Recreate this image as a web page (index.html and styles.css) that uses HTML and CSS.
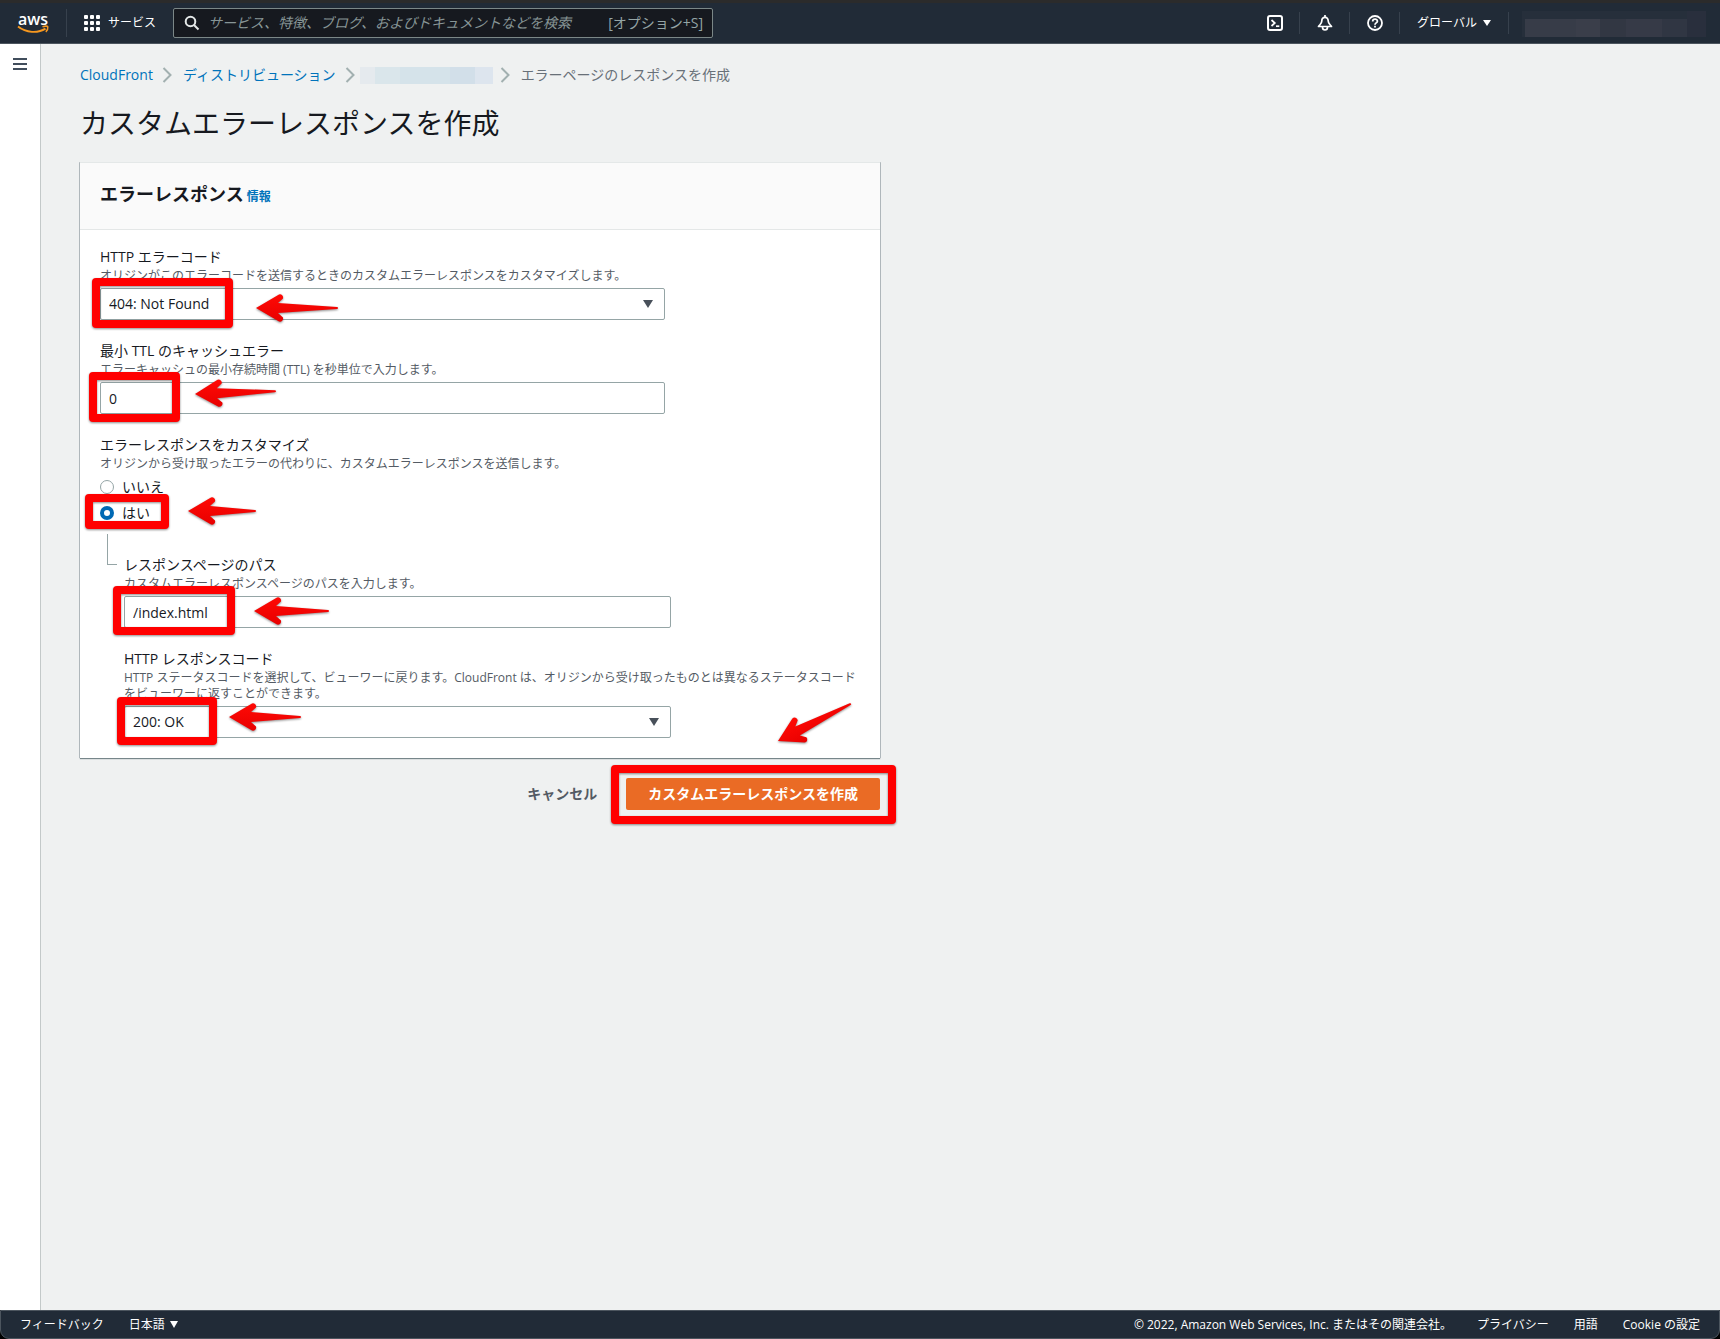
FILE: index.html
```html
<!DOCTYPE html>
<html lang="ja">
<head>
<meta charset="utf-8">
<meta name="viewport" content="width=device-width, initial-scale=1">
<title>CloudFront - カスタムエラーレスポンスを作成</title>
<link rel="stylesheet" href="styles.css">
</head>
<body>
<header class="topbar">
  <a class="logo" href="#" aria-label="AWS">
    <svg width="34" height="28" viewBox="0 0 34 28">
      <text class="logo-text" x="17" y="16" text-anchor="middle">aws</text>
      <path d="M2 17.600C10 24 22 24.500 29.500 19.600" fill="none" stroke="#f7981f" stroke-width="1.900"/>
      <path d="M26.500 17.800C29 17 31.500 17.200 31.800 17.900C32 19 31.200 21.500 29.800 22.900" fill="none" stroke="#f7981f" stroke-width="1.500"/>
    </svg>
  </a>
  <button class="services" type="button">
    <svg width="16" height="16" viewBox="0 0 16 16" fill="#fff">
      <rect width="4" height="4" rx="1"/><rect x="6" width="4" height="4" rx="1"/><rect x="12" width="4" height="4" rx="1"/>
      <rect y="6" width="4" height="4" rx="1"/><rect x="6" y="6" width="4" height="4" rx="1"/><rect x="12" y="6" width="4" height="4" rx="1"/>
      <rect y="12" width="4" height="4" rx="1"/><rect x="6" y="12" width="4" height="4" rx="1"/><rect x="12" y="12" width="4" height="4" rx="1"/>
    </svg>
    サービス
  </button>
  <label class="search">
    <svg width="16" height="16" viewBox="0 0 16 16" fill="none" stroke="#e4e8e8" stroke-width="2">
      <circle cx="6.500" cy="6.500" r="4.800"/><path d="M10 10l4.500 4.500"/>
    </svg>
    <input class="search-input" type="text" aria-label="検索" placeholder="サービス、特徴、ブログ、およびドキュメントなどを検索">
    <span class="shortcut">[オプション+S]</span>
  </label>
  <div class="tools">
    <button class="tool" type="button" aria-label="CloudShell">
      <svg width="16" height="16" viewBox="0 0 16 16" fill="none" stroke="#fff" stroke-width="2">
        <rect x="1" y="1" width="14" height="14" rx="2"/><path d="M4.500 5l3.300 3-3.300 3" stroke-width="1.700"/><path d="M9 11.200h3.300" stroke-width="1.700"/>
      </svg>
    </button>
    <button class="tool" type="button" aria-label="通知">
      <svg width="16" height="16" viewBox="0 0 16 16" fill="none" stroke="#fff" stroke-width="1.700" stroke-linejoin="round">
        <path d="M8 2.300C5.700 2.300 4.800 4 4.800 6C4.800 8.500 3 9.500 1.500 11.500H14.500C13 9.500 11.200 8.500 11.200 6C11.200 4 10.300 2.300 8 2.300Z"/>
        <path d="M8 0v2.500M5.500 12c0 4 5 4 5 0"/>
      </svg>
    </button>
    <button class="tool" type="button" aria-label="ヘルプ">
      <svg width="16" height="16" viewBox="0 0 16 16" fill="none" stroke="#fff" stroke-width="1.800">
        <circle cx="8" cy="8" r="7"/><path d="M5.700 6.400C5.700 3.300 10.400 3.400 10.400 6.200C10.400 7.900 8 7.900 8 9.700M8 10.800v1.800"/>
      </svg>
    </button>
    <button class="region" type="button">グローバル
      <svg width="8" height="6" viewBox="0 0 8 6" fill="#fff"><path d="M0 0h8L4 6z"/></svg>
    </button>
    <div class="account">
      <svg width="184" height="26" viewBox="0 0 184 26">
        <path fill="#262f3b" d="M0 0h165v26H0z"/><path fill="#292f3d" d="M165 0h19v26h-19z"/>
        <path fill="#373c48" d="M3 8h51v18H3z"/><path fill="#3a3e4a" d="M54 8h24v18H54z"/>
        <path fill="#323743" d="M78 8h26v18H78z"/><path fill="#363a47" d="M104 8h36v18h-36z"/>
        <path fill="#303643" d="M140 8h25v18h-25z"/>
      </svg>
    </div>
  </div>
</header>

<div class="shell">
  <nav class="rail">
    <button class="menu" type="button" aria-label="メニュー">
      <svg width="14" height="12" viewBox="0 0 14 12" fill="#414d5c"><path d="M0 0h14v2H0zM0 5h14v2H0zM0 10h14v2H0z"/></svg>
    </button>
  </nav>
  <main class="main">
    <nav class="crumbs">
      <a href="#">CloudFront</a>
      <svg class="chevron" width="10" height="16" viewBox="0 0 10 16"><path d="M1.500 1l7 7-7 7"/></svg>
      <a href="#">ディストリビューション</a>
      <svg class="chevron" width="10" height="16" viewBox="0 0 10 16"><path d="M1.500 1l7 7-7 7"/></svg>
      <svg class="masked" width="133" height="17" viewBox="0 0 133 17">
        <path fill="#e5eaee" d="M0 0h15v17H0z"/><path fill="#dae6eb" d="M15 0h25v17H15z"/>
        <path fill="#d5e3ea" d="M40 0h50v17H40z"/><path fill="#d2dfe9" d="M90 0h25v17H90z"/>
        <path fill="#dde5ee" d="M115 0h18v17h-18z"/>
      </svg>
      <svg class="chevron" width="10" height="16" viewBox="0 0 10 16"><path d="M1.500 1l7 7-7 7"/></svg>
      <span>エラーページのレスポンスを作成</span>
    </nav>
    <h1 class="title">カスタムエラーレスポンスを作成</h1>

    <form class="form">
      <section class="card">
        <div class="card-head">
          <h2>エラーレスポンス</h2>
          <a href="#">情報</a>
        </div>
        <div class="card-body">
          <div class="field">
            <label for="code">HTTP エラーコード</label>
            <p class="help">オリジンがこのエラーコードを送信するときのカスタムエラーレスポンスをカスタマイズします。</p>
            <div class="select">
              <select id="code"><option>404: Not Found</option></select>
              <svg class="caret" width="10" height="8" viewBox="0 0 10 8"><path d="M0 0h10L5 8z"/></svg>
            </div>
          </div>
          <div class="field">
            <label for="ttl">最小 TTL のキャッシュエラー</label>
            <p class="help">エラーキャッシュの最小存続時間 (TTL) を秒単位で入力します。</p>
            <input class="text" id="ttl" type="text" value="0">
          </div>
          <fieldset class="field">
            <legend>エラーレスポンスをカスタマイズ</legend>
            <p class="help">オリジンから受け取ったエラーの代わりに、カスタムエラーレスポンスを送信します。</p>
            <div class="radios">
              <label class="radio"><input type="radio" name="customize">いいえ</label>
              <label class="radio"><input type="radio" name="customize" checked>はい</label>
            </div>
          </fieldset>
          <div class="nested">
            <div class="elbow"></div>
            <div class="nested-fields">
              <div class="field">
                <label for="path">レスポンスページのパス</label>
                <p class="help">カスタムエラーレスポンスページのパスを入力します。</p>
                <input class="text" id="path" type="text" value="/index.html">
              </div>
              <div class="field">
                <label for="status">HTTP レスポンスコード</label>
                <p class="help">HTTP ステータスコードを選択して、ビューワーに戻ります。CloudFront は、オリジンから受け取ったものとは異なるステータスコードをビューワーに返すことができます。</p>
                <div class="select">
                  <select id="status"><option>200: OK</option></select>
                  <svg class="caret" width="10" height="8" viewBox="0 0 10 8"><path d="M0 0h10L5 8z"/></svg>
                </div>
              </div>
            </div>
          </div>
        </div>
      </section>
      <div class="actions">
        <button class="cancel" type="button">キャンセル</button>
        <button class="submit" type="button">カスタムエラーレスポンスを作成</button>
      </div>
    </form>

    <!-- Walkthrough marks drawn over the form -->
    <svg class="marks" width="920" height="840" viewBox="0 0 920 840" aria-hidden="true">
      <defs>
        <linearGradient id="red" x1="0" y1="0" x2="0" y2="1"><stop offset="0" stop-color="#ff0a05"/><stop offset="1" stop-color="#e80000"/></linearGradient>
      </defs>
      <g fill="none" stroke="#f00" stroke-width="8" stroke-linejoin="round">
        <rect x="96" y="282" width="133" height="42"/>
        <rect x="93" y="376" width="83" height="42"/>
        <rect x="89" y="498" width="76" height="27"/>
        <rect x="117" y="590" width="114" height="41"/>
        <rect x="121" y="701" width="92" height="40"/>
        <rect x="615" y="769" width="277" height="51"/>
      </g>
      <g fill="url(#red)">
        <path transform="translate(256 308)" d="M0 0L23 -13.500A3.200 3.200 0 0 1 27 -9.500L22 -5L81 -1A1 1 0 0 1 81 1L22 5L27 9.500A3.200 3.200 0 0 1 23 13.500Z"/>
        <path transform="translate(195 394) rotate(-2)" d="M0 0L23 -13.500A3.200 3.200 0 0 1 27 -9.500L22 -5L80 -1A1 1 0 0 1 80 1L22 5L27 9.500A3.200 3.200 0 0 1 23 13.500Z"/>
        <path transform="translate(188 511)" d="M0 0L23 -13.500A3.200 3.200 0 0 1 27 -9.500L22 -5L67 -1A1 1 0 0 1 67 1L22 5L27 9.500A3.200 3.200 0 0 1 23 13.500Z"/>
        <path transform="translate(254 611)" d="M0 0L23 -13.500A3.200 3.200 0 0 1 27 -9.500L22 -5L74 -1A1 1 0 0 1 74 1L22 5L27 9.500A3.200 3.200 0 0 1 23 13.500Z"/>
        <path transform="translate(229 717)" d="M0 0L23 -13.500A3.200 3.200 0 0 1 27 -9.500L22 -5L71 -1A1 1 0 0 1 71 1L22 5L27 9.500A3.200 3.200 0 0 1 23 13.500Z"/>
        <path transform="translate(778 741) rotate(-27)" d="M0 0L23 -13.500A3.200 3.200 0 0 1 27 -9.500L22 -5L81 -1A1 1 0 0 1 81 1L22 5L27 9.500A3.200 3.200 0 0 1 23 13.500Z"/>
      </g>
    </svg>
  </main>
</div>

<footer class="footer">
  <a href="#">フィードバック</a>
  <button class="lang" type="button">日本語
    <svg width="8" height="7" viewBox="0 0 8 7" fill="#fff"><path d="M0 0h8L4 7z"/></svg>
  </button>
  <span class="copyright">© 2022, Amazon Web Services, Inc. またはその関連会社。</span>
  <a href="#">プライバシー</a>
  <a href="#">用語</a>
  <a href="#">Cookie の設定</a>
</footer>
</body>
</html>
```
FILE: styles.css
```css
* { box-sizing: border-box; }

html { background: #000; }

body {
  margin: 0;
  min-height: 100vh;
  display: flex;
  flex-direction: column;
  position: relative;
  font: 14px/20px "Open Sans", "Noto Sans CJK JP", sans-serif;
  color: #16191f;
}

button, input, select { font: inherit; color: inherit; margin: 0; }
button { background: none; border: 0; padding: 0; }
a { color: #0073bb; text-decoration: none; }
h1, h2, p, fieldset, legend { margin: 0; padding: 0; border: 0; }
svg { display: block; flex: none; }

/* Top bar */
.topbar {
  display: flex;
  align-items: center;
  height: 44px;
  padding: 0 13px 0 16px;
  background: #212b37;
  border-top: 3px solid #2b2b2b;
  border-bottom: 1px solid #4c555e;
  color: #fff;
  font-size: 12px;
}
.logo { padding-right: 16px; border-right: 1px solid #37414d; }
.logo-text { font: 600 16px "Open Sans", sans-serif; fill: #fff; }
.services { display: flex; align-items: center; gap: 8px; margin-left: 17px; }
.search {
  display: flex;
  align-items: center;
  gap: 8px;
  width: 540px;
  height: 30px;
  margin-left: 17px;
  padding: 0 9px 0 10px;
  background: #16191f;
  border: 1px solid #7b8787;
  border-radius: 2px;
  font-size: 14px;
}
.search-input { flex: 1; min-width: 0; padding: 0; border: 0; background: none; outline: 0; }
.search-input::placeholder { color: #879596; font-style: italic; opacity: 1; }
.shortcut { color: #95a5a6; }
.tools { display: flex; align-items: center; margin-left: auto; }
.tool { display: grid; place-items: center; width: 50px; height: 22px; border-right: 1px solid #37414d; }
.region { display: flex; align-items: center; gap: 6px; height: 22px; padding: 0 17px; border-right: 1px solid #37414d; }
.account { padding: 2px 0 0 13px; margin-right: 1px; }

/* Page frame */
.shell { flex: 1; display: flex; background: #eff1f1; }
.rail { flex: none; display: flex; align-items: flex-start; width: 41px; padding: 14px 13px; background: #fff; border-right: 1px solid #c3c9c9; }
.main { flex: 1; min-width: 0; padding: 20px 40px 40px 39px; }

.crumbs { display: flex; align-items: center; height: 22px; color: #687078; }
.chevron { margin: 0 11px 0 9px; fill: none; stroke: #a2b0b0; stroke-width: 2; }
.masked { margin: 0 -2px 0 -6px; }

.title { margin: 18px 0 20px; font-size: 28px; line-height: 38px; font-weight: 400; }

/* Form card */
.form { max-width: 800px; }
.card {
  background: #fff;
  border-top: 1px solid #e4e8e8;
  box-shadow: 0 1px 1px rgba(0, 28, 36, .5), 1px 0 0 #c0c7ca, -1px 0 0 #c0c7ca;
}
.card-head {
  display: flex;
  align-items: baseline;
  gap: 3px;
  padding: 19px 20px 22px;
  background: #fafafa;
  border-bottom: 1px solid #e4e7e7;
}
.card-head h2 { font-size: 18px; line-height: 24px; font-weight: 700; }
.card-head a { font-size: 12px; font-weight: 700; }
.card-body { padding: 17px 20px 20px; }

.field { display: block; min-width: 0; }
.field + .field { margin-top: 21px; }
.field > label, .field > legend { display: block; height: 21px; }
.help { margin-bottom: 4px; font-size: 12px; line-height: 16px; color: #545b64; }
.text, .select { max-width: 565px; width: 100%; height: 32px; }
.nested .text, .nested .select { max-width: 547px; }
.text, .select select {
  display: block;
  padding: 0 8px;
  background: #fff;
  border: 1px solid #95a5a6;
  border-radius: 2px;
}
.select { display: grid; align-items: center; }
.select select { grid-area: 1 / 1; width: 100%; height: 32px; appearance: none; }
.caret { grid-area: 1 / 1; justify-self: end; margin-right: 12px; fill: #48505a; pointer-events: none; }

.radios { margin-top: -2px; }
.radio { display: flex; align-items: center; gap: 8px; height: 26px; }
.radio input {
  appearance: none;
  width: 14px;
  height: 14px;
  background: #fff;
  border: 1px solid #95a5a6;
  border-radius: 50%;
}
.radio input:checked { border: 4px solid #0069b4; }

.nested { display: flex; gap: 7px; padding-left: 7px; }
.elbow { flex: none; width: 10px; height: 31px; margin-top: 8px; border-left: 1px solid #95a5a6; border-bottom: 1px solid #95a5a6; }
.nested-fields { flex: 1; min-width: 0; padding-top: 29px; }

.actions { display: flex; justify-content: flex-end; gap: 9px; margin-top: 20px; font-weight: 700; }
.actions button { height: 32px; border-radius: 2px; }
.cancel { padding: 0 20px; color: #545b64; }
.submit { padding: 0 22px; background: #ea6b25; color: #fff; }

.marks { position: absolute; left: 0; top: 0; pointer-events: none; filter: drop-shadow(0 1px 1px rgba(0, 0, 0, .45)); }

/* Footer */
.footer {
  display: flex;
  align-items: center;
  height: 29px;
  padding: 0 19px;
  background: #212b37;
  border: 1px solid #4c555e;
  border-radius: 0 0 9px 9px;
  color: #fff;
  font-size: 12px;
  gap: 25px;
}
.footer a { color: #fff; }
.lang { display: flex; align-items: center; gap: 5px; }
.copyright { margin-left: auto; }
```
